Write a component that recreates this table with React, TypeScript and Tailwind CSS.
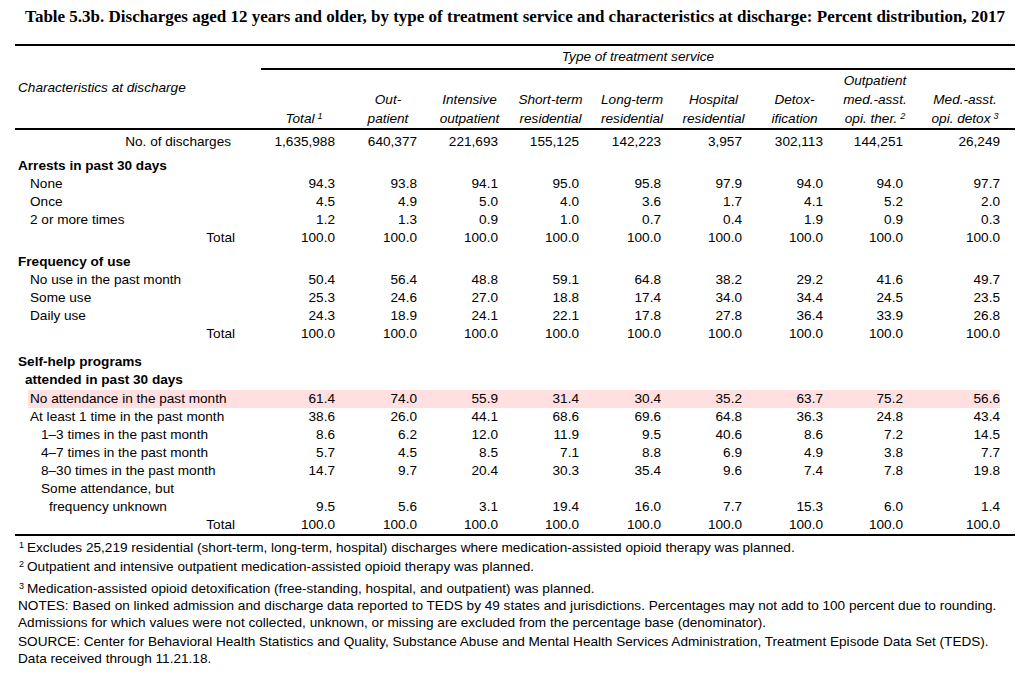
import React from 'react';

type Row = {
  label: string;
  kind?: 'head' | 'item' | 'sub' | 'sub2' | 'total' | 'count' | 'head2';
  values?: string[];
  gap?: 'sm' | 'md';
  highlight?: boolean;
};

const T = Array(9).fill('100.0');

const rows: Row[] = [
  { label: 'No. of discharges', kind: 'count', values: ['1,635,988', '640,377', '221,693', '155,125', '142,223', '3,957', '302,113', '144,251', '26,249'] },
  { label: 'Arrests in past 30 days', kind: 'head', gap: 'sm' },
  { label: 'None', kind: 'item', values: ['94.3', '93.8', '94.1', '95.0', '95.8', '97.9', '94.0', '94.0', '97.7'] },
  { label: 'Once', kind: 'item', values: ['4.5', '4.9', '5.0', '4.0', '3.6', '1.7', '4.1', '5.2', '2.0'] },
  { label: '2 or more times', kind: 'item', values: ['1.2', '1.3', '0.9', '1.0', '0.7', '0.4', '1.9', '0.9', '0.3'] },
  { label: 'Total', kind: 'total', values: T },
  { label: 'Frequency of use', kind: 'head', gap: 'sm' },
  { label: 'No use in the past month', kind: 'item', values: ['50.4', '56.4', '48.8', '59.1', '64.8', '38.2', '29.2', '41.6', '49.7'] },
  { label: 'Some use', kind: 'item', values: ['25.3', '24.6', '27.0', '18.8', '17.4', '34.0', '34.4', '24.5', '23.5'] },
  { label: 'Daily use', kind: 'item', values: ['24.3', '18.9', '24.1', '22.1', '17.8', '27.8', '36.4', '33.9', '26.8'] },
  { label: 'Total', kind: 'total', values: T },
  { label: 'Self-help programs', kind: 'head', gap: 'md' },
  { label: 'attended in past 30 days', kind: 'head2' },
  { label: 'No attendance in the past month', kind: 'item', highlight: true, values: ['61.4', '74.0', '55.9', '31.4', '30.4', '35.2', '63.7', '75.2', '56.6'] },
  { label: 'At least 1 time in the past month', kind: 'item', values: ['38.6', '26.0', '44.1', '68.6', '69.6', '64.8', '36.3', '24.8', '43.4'] },
  { label: '1–3 times in the past month', kind: 'sub', values: ['8.6', '6.2', '12.0', '11.9', '9.5', '40.6', '8.6', '7.2', '14.5'] },
  { label: '4–7 times in the past month', kind: 'sub', values: ['5.7', '4.5', '8.5', '7.1', '8.8', '6.9', '4.9', '3.8', '7.7'] },
  { label: '8–30 times in the past month', kind: 'sub', values: ['14.7', '9.7', '20.4', '30.3', '35.4', '9.6', '7.4', '7.8', '19.8'] },
  { label: 'Some attendance, but', kind: 'sub' },
  { label: 'frequency unknown', kind: 'sub2', values: ['9.5', '5.6', '3.1', '19.4', '16.0', '7.7', '15.3', '6.0', '1.4'] },
  { label: 'Total', kind: 'total', values: T },
];

const labelClass: Record<string, string> = {
  count: 'text-right pr-[30px]',
  head: 'font-bold pl-[3px]',
  head2: 'font-bold pl-[10px]',
  item: 'pl-[15px]',
  sub: 'pl-[26px]',
  sub2: 'pl-[34px]',
  total: 'text-right pr-[26px]',
};

function Sup({ n }: { n: string }) {
  return <sup className="text-[9px] ml-[3px]">{n}</sup>;
}

const headers: React.ReactNode[] = [
  <>Total<Sup n="1" /></>,
  <>Out-<br />patient</>,
  <>Intensive<br />outpatient</>,
  <>Short-term<br />residential</>,
  <>Long-term<br />residential</>,
  <>Hospital<br />residential</>,
  <>Detox-<br />ification</>,
  <>Outpatient<br />med.-asst.<br />opi. ther.<Sup n="2" /></>,
  <>Med.-asst.<br />opi. detox<Sup n="3" /></>,
];

function DataRow({ row }: { row: Row }) {
  const gap = row.gap === 'sm' ? 'mt-[6px]' : row.gap === 'md' ? 'mt-[10px]' : '';
  if (row.highlight) {
    return (
      <div className="grid grid-cols-[233px_86px_82px_81px_81px_82px_81px_81px_80px_85px] ml-[13px] mt-[1px] w-[972px] h-[18px] leading-[18px] bg-[#ffdfdf]">
        <div className="pl-[2px] whitespace-nowrap">{row.label}</div>
        {row.values!.map((v, i) => (
          <div key={i} className={i === 8 ? 'text-right' : 'text-right pr-[12px]'}>{v}</div>
        ))}
      </div>
    );
  }
  return (
    <div className={`grid grid-cols-[246px_86px_82px_81px_81px_82px_81px_81px_80px_100px] h-[18px] leading-[18px] ${gap}`}>
      <div className={`whitespace-nowrap ${labelClass[row.kind || 'item']}`}>{row.label}</div>
      {(row.values || Array(9).fill('')).map((v, i) => (
        <div key={i} className={i === 8 ? 'text-right pr-[15px]' : 'text-right pr-[12px]'}>{v}</div>
      ))}
    </div>
  );
}

export default function App() {
  return (
    <div className="w-[1023px] h-[678px] bg-white text-black font-['Liberation_Sans',Arial,sans-serif] text-[13.6px] overflow-hidden">
      <div className="ml-[15px] w-[1000px]">
        <h1 className="pt-[7px] text-center font-['Liberation_Serif','Times_New_Roman',serif] font-bold text-[17px] leading-[20px] whitespace-nowrap">
          Table 5.3b. Discharges aged 12 years and older, by type of treatment service and characteristics at discharge: Percent distribution, 2017
        </h1>

        <div className="mt-[17px] h-[2px] bg-black" />
        <div className="ml-[246px] h-[22px] leading-[22px] text-center italic">Type of treatment service</div>
        <div className="ml-[246px] h-[2px] bg-black" />

        {/* column headers */}
        <div className="grid grid-cols-[246px_86px_82px_81px_81px_82px_81px_81px_80px_100px] h-[58px]">
          <div className="pl-[3px] pt-[8px] leading-[19px] italic whitespace-nowrap">Characteristics at discharge</div>
          {headers.map((h, i) => (
            <div key={i} className="flex items-end justify-center text-center italic leading-[19px] whitespace-nowrap">
              <div>{h}</div>
            </div>
          ))}
        </div>
        <div className="h-[2px] bg-black" />

        <div className="mt-[3px]">
          {rows.map((r, i) => (
            <DataRow key={i} row={r} />
          ))}
        </div>
        <div className="h-[2px] bg-black" />
      </div>

      {/* footnotes */}
      <div className="pl-[18px] leading-[17px]">
        <p className="mt-[3px] whitespace-nowrap"><sup className="inline-block w-[9px] pl-[1px] text-[9px]">1</sup>Excludes 25,219 residential (short-term, long-term, hospital) discharges where medication-assisted opioid therapy was planned.</p>
        <p className="mt-[2px] whitespace-nowrap"><sup className="inline-block w-[9px] pl-[1px] text-[9px]">2</sup>Outpatient and intensive outpatient medication-assisted opioid therapy was planned.</p>
        <p className="mt-[5px] whitespace-nowrap"><sup className="inline-block w-[9px] pl-[1px] text-[9px]">3</sup>Medication-assisted opioid detoxification (free-standing, hospital, and outpatient) was planned.</p>
        <p className="whitespace-nowrap">
          NOTES: Based on linked admission and discharge data reported to TEDS by 49 states and jurisdictions. Percentages may not add to 100 percent due to rounding.
          <br />
          Admissions for which values were not collected, unknown, or missing are excluded from the percentage base (denominator).
        </p>
        <p className="mt-[2px] whitespace-nowrap">
          SOURCE: Center for Behavioral Health Statistics and Quality, Substance Abuse and Mental Health Services Administration, Treatment Episode Data Set (TEDS).
          <br />
          Data received through 11.21.18.
        </p>
      </div>
    </div>
  );
}
